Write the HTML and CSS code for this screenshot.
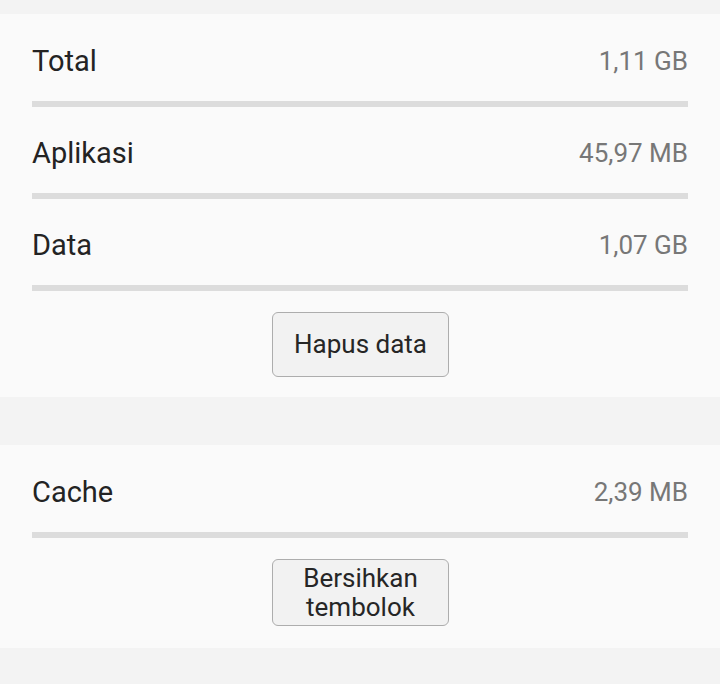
FILE: index.html
```html
<!DOCTYPE html>
<html lang="id">
<head>
<meta charset="utf-8">
<title>Penyimpanan</title>
<link rel="stylesheet" href="styles.css">
</head>
<body>
<div class="page">
  <section class="card">
    <div class="row"><span class="label">Total</span><span class="value">1,11 GB</span></div>
    <div class="divider"></div>
    <div class="row"><span class="label">Aplikasi</span><span class="value">45,97 MB</span></div>
    <div class="divider"></div>
    <div class="row"><span class="label">Data</span><span class="value">1,07 GB</span></div>
    <div class="divider"></div>
    <div class="actions"><button class="btn">Hapus data</button></div>
  </section>
  <section class="card card-2">
    <div class="row"><span class="label">Cache</span><span class="value">2,39 MB</span></div>
    <div class="divider"></div>
    <div class="actions actions-2"><button class="btn btn-2">Bersihkan<br>tembolok</button></div>
  </section>
</div>
</body>
</html>
```

FILE: styles.css
```css
html, body {
  margin: 0;
  padding: 0;
  background: #f3f3f3;
}
body {
  font-family: Roboto, "Liberation Sans", sans-serif;
  width: 720px;
  height: 684px;
  overflow: hidden;
}
.page {
  padding-top: 14px;
  display: flex;
  flex-direction: column;
  gap: 48px;
}
.card {
  background: #fafafa;
  padding: 1px 32px 0;
}
.row {
  display: flex;
  justify-content: space-between;
  align-items: center;
  height: 86px;
  box-sizing: border-box;
  padding-top: 6px;
}
.label {
  font-size: 29px;
  color: #232323;
  line-height: 34px;
}
.value {
  font-size: 26px;
  color: #777777;
  line-height: 34px;
}
.divider {
  height: 6px;
  background: #dcdcdc;
}
.actions {
  display: flex;
  justify-content: center;
  padding: 21px 0 20px;
}
.actions-2 {
  padding-bottom: 22px;
}
.btn {
  width: 177px;
  min-height: 65px;
  box-sizing: border-box;
  margin-left: 1px;
  background: #f2f2f2;
  border: 1px solid #adadad;
  border-radius: 6px;
  font-family: Roboto, "Liberation Sans", sans-serif;
  font-size: 26px;
  line-height: 29px;
  color: #262626;
  padding: 3.5px 10px;
}
```
